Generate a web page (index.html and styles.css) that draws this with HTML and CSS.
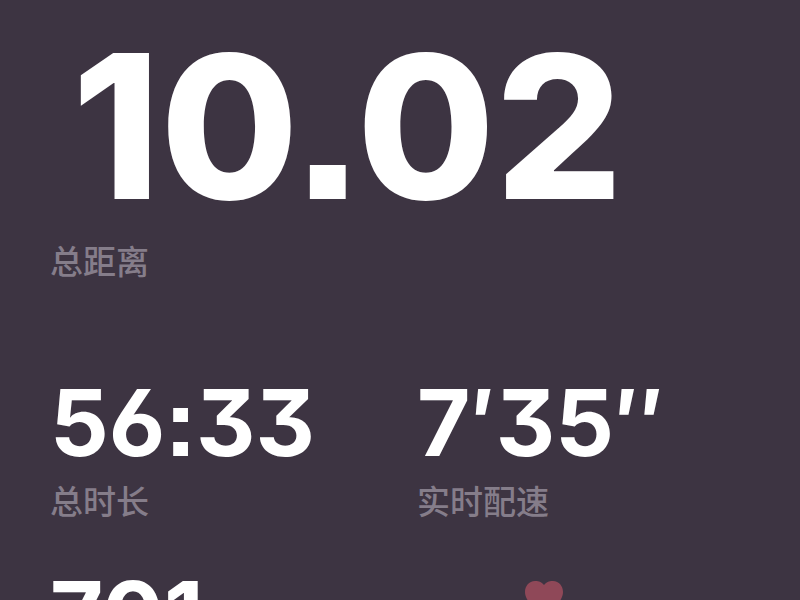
FILE: index.html
```html
<!DOCTYPE html>
<html lang="zh-CN">
<head>
    <meta charset="UTF-8">
    <title>跑步数据</title>
    <meta name="viewport" content="width=device-width, initial-scale=1.0">
    <link rel="stylesheet" href="styles.css">
</head>
<body>
    <main class="container">
        <section class="total">
            <div class="distance">10.02</div>
            <div class="label">总距离</div>
        </section>

        <section class="stats">
            <div class="stat">
                <div class="value">56:33</div>
                <div class="label">总时长</div>
            </div>
            <div class="stat">
                <div class="value">7′35″</div>
                <div class="label">实时配速</div>
            </div>
            <div class="stat">
                <div class="value">701</div>
            </div>
            <div class="stat heart-rate">
                <svg class="heart" viewBox="0 0 38 35" aria-hidden="true">
                    <path d="M19 4C16 0 12 0 10 0C4 0 0 5 0 11C0 20 10 28 19 35C28 28 38 20 38 11C38 5 34 0 28 0C26 0 22 0 19 4Z"/>
                </svg>
            </div>
        </section>
    </main>
</body>
</html>
```
FILE: styles.css
```css
* {
    box-sizing: border-box;
}

body {
    margin: 0;
    height: 100vh;
    overflow: hidden;
    background-color: #3d3442;
    color: white;
    font-family: Inter, "Noto Sans CJK SC", sans-serif;
}

.container {
    padding: 20px 50px;
}

/* 3 用平顶字形，6 用开口字形，标点用方点 */
.distance,
.value {
    font-feature-settings: "cv09", "cv03", "ss07", "calt" 0;
    white-space: nowrap;
}

.distance {
    padding-left: 22px;
    font-size: 200px;
    font-weight: 800;
    line-height: 212px;
}

.value {
    font-size: 92px;
    font-weight: 700;
    line-height: 98px;
}

.label {
    padding-top: 4px;
    color: #857d8a;
    font-family: "Noto Sans CJK SC", sans-serif;
    font-size: 33px;
    font-weight: 500;
    line-height: 48px;
}

.total {
    margin-bottom: 90px;
}

.stats {
    display: grid;
    grid-template-columns: 1fr 1fr;
    gap: 42px 34px;
}

.heart-rate {
    padding: 15px 108px;
}

.heart {
    display: block;
    width: 38px;
    height: 35px;
    fill: #8f4858;
}
```
